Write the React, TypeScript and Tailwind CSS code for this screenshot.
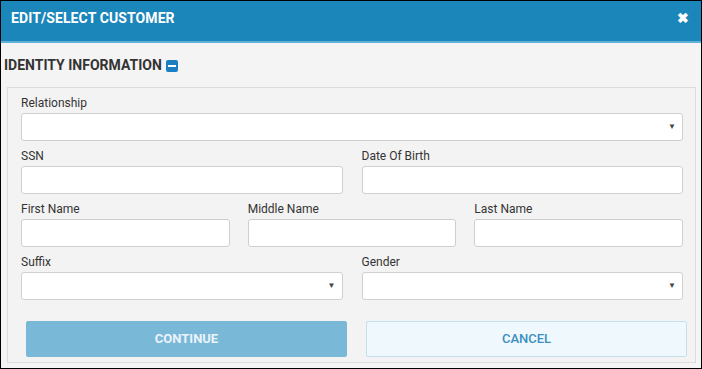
import React from 'react';

const Field = ({ label, select }: { label: string; select?: boolean }) => (
  <div className="flex flex-col">
    <label className="h-[15px] text-[12px] leading-[15px] text-[#333] mb-[2px]">{label}</label>
    <div className="relative h-[28px] bg-white border border-[#cfcfcf] rounded-[3px]">
      {select && (
        <span className="absolute right-[6px] top-[9px] text-[8px] leading-[8px] text-[#444]">▼</span>
      )}
    </div>
  </div>
);

const App = () => {
  return (
    <div
      className="w-[702px] h-[369px] border border-black bg-[#f4f4f4] flex flex-col overflow-hidden"
      style={{ fontFamily: 'Roboto, "Liberation Sans", sans-serif' }}
    >
      {/* header */}
      <div className="h-[42px] shrink-0 bg-[#1b86ba] border-b-2 border-[#5fb1d8] flex items-center justify-between pl-[10px] pr-[12px]">
        <h1 className="text-white font-bold text-[14px] tracking-[0.1px] -mt-[6px]">EDIT/SELECT CUSTOMER</h1>
        <span className="text-white font-bold text-[14px] -mt-[6px]">✖</span>
      </div>

      {/* section title */}
      <div className="flex items-center gap-[4px] pl-[3px] mt-[14px] h-[17px]">
        <h2 className="text-[#333] font-bold text-[14px] leading-[17px]">IDENTITY INFORMATION</h2>
        <span className="w-[12px] h-[12px] rounded-[2px] bg-[#1a7fc0] flex items-center justify-center">
          <span className="w-[8px] h-[2px] bg-white" />
        </span>
      </div>

      {/* panel */}
      <div className="ml-[6px] mr-[5px] mt-[13px] flex-1 mb-[5px] border border-[#dcdcdc] bg-[#f3f3f3] pt-[8px] flex flex-col">
        <div className="pl-[13px] pr-[12px] flex flex-col gap-[8px]">
          <Field label="Relationship" select />
          <div className="grid grid-cols-2 gap-[19px]">
            <Field label="SSN" />
            <Field label="Date Of Birth" />
          </div>
          <div className="grid grid-cols-3 gap-[18px]">
            <Field label="First Name" />
            <Field label="Middle Name" />
            <Field label="Last Name" />
          </div>
          <div className="grid grid-cols-2 gap-[19px]">
            <Field label="Suffix" select />
            <Field label="Gender" select />
          </div>
        </div>
        <div className="mt-[21px] pl-[18px] pr-[8px] grid grid-cols-2 gap-[19px]">
          <button className="h-[36px] rounded-[2px] bg-[#7ab8d7] text-[#eaf4fa] font-bold text-[13px]">CONTINUE</button>
          <button className="h-[36px] rounded-[2px] bg-[#eff8fd] border border-[#c4e0ef] text-[#3b8fc1] font-medium text-[13px]">CANCEL</button>
        </div>
      </div>
    </div>
  );
};

export default App;
